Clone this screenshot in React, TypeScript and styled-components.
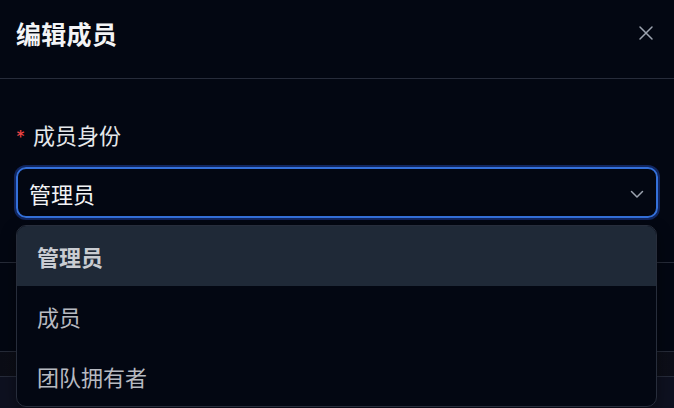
import React from "react";
import styled, { createGlobalStyle } from "styled-components";

const Global = createGlobalStyle`
  html, body { margin: 0; padding: 0; background: #030712; }
  body {
    width: 674px; height: 408px; overflow: hidden;
    font-family: Inter, "Noto Sans CJK SC", "Noto Sans", sans-serif;
  }
`;

const Page = styled.div`
  position: relative;
  width: 674px;
  height: 408px;
  overflow: hidden;
  background: #030712;
  display: flex;
  flex-direction: column;
`;

const Header = styled.div`
  height: 79px;
  border-bottom: 1px solid #272c3a;
  display: flex;
  align-items: center;
  justify-content: space-between;
  padding: 0 18px 13px 16px;
  box-sizing: border-box;
  flex-shrink: 0;
`;

const Title = styled.h2`
  margin: 0;
  font-size: 25px;
  font-weight: 700;
  color: #f3f4f6;
  letter-spacing: 0.3px;
`;

const CloseBtn = styled.button`
  background: none;
  border: none;
  padding: 0;
  width: 20px;
  height: 20px;
  display: flex;
  align-items: center;
  justify-content: center;
  color: #9ca3af;
  cursor: pointer;
`;

const Body = styled.div`
  padding: 42px 16px 44px 16px;
  display: flex;
  flex-direction: column;
  gap: 16px;
  flex-shrink: 0;
`;

const Label = styled.label`
  display: flex;
  align-items: center;
  gap: 8px;
  line-height: 30px;
  font-size: 22px;
  color: #e5e7eb;
`;

const Star = styled.span`
  color: #ef4444;
  font-size: 18px;
  line-height: 1;
  margin-top: 4px;
`;

const Select = styled.div`
  height: 51px;
  box-sizing: border-box;
  border: 2px solid #3470da;
  box-shadow: 0 0 0 2px rgba(30, 64, 160, 0.55);
  border-radius: 10px;
  display: flex;
  align-items: center;
  justify-content: space-between;
  padding: 0 12px 0 11px;
  font-size: 22px;
  color: #f3f4f6;
`;

const Chevron = styled.span`
  display: flex;
  color: #9ca3af;
  margin-top: 3px;
`;

const Footer = styled.div`
  height: 88px;
  border-top: 1px solid #262b38;
  border-bottom: 1px solid #262b38;
  flex-shrink: 0;
`;

const Band = styled.div`
  height: 24px;
  background: linear-gradient(90deg, #0b0d16, #15151d 30%, #13141c 70%, #0c0e18);
  border-bottom: 1px solid #262b3a;
  flex-shrink: 0;
`;

const Rest = styled.div`
  flex: 1;
  background: #0e1120;
`;

const Menu = styled.div`
  position: absolute;
  top: 225px;
  left: 16px;
  width: 641px;
  box-sizing: border-box;
  border: 1px solid #272d3b;
  border-radius: 10px;
  background: #030712;
  overflow: hidden;
  box-shadow: 0 6px 16px rgba(0, 0, 0, 0.4);
`;

const Option = styled.div<{ $active?: boolean }>`
  height: 60px;
  display: flex;
  align-items: center;
  padding: 0 20px;
  font-size: 22px;
  color: ${(p) => (p.$active ? "#c9ccd2" : "#b7bac1")};
  font-weight: ${(p) => (p.$active ? 700 : 400)};
  background: ${(p) => (p.$active ? "#1f2937" : "transparent")};
`;

export default function App() {
  return (
    <>
      <Global />
      <Page>
        <Header>
          <Title>编辑成员</Title>
          <CloseBtn aria-label="关闭">
            <svg width="16" height="16" viewBox="0 0 16 16" fill="none" stroke="currentColor" strokeWidth="1.5" strokeLinecap="round">
              <path d="M2 2 L14 14 M14 2 L2 14" />
            </svg>
          </CloseBtn>
        </Header>
        <Body>
          <Label>
            <Star>*</Star>
            成员身份
          </Label>
          <Select>
            <span>管理员</span>
            <Chevron>
              <svg width="14" height="10" viewBox="0 0 14 10" fill="none" stroke="currentColor" strokeWidth="1.5" strokeLinecap="round" strokeLinejoin="round">
                <path d="M1.5 2.5 L7 8 L12.5 2.5" />
              </svg>
            </Chevron>
          </Select>
        </Body>
        <Footer />
        <Band />
        <Rest />
        <Menu>
          <Option $active>管理员</Option>
          <Option>成员</Option>
          <Option>团队拥有者</Option>
        </Menu>
      </Page>
    </>
  );
}
